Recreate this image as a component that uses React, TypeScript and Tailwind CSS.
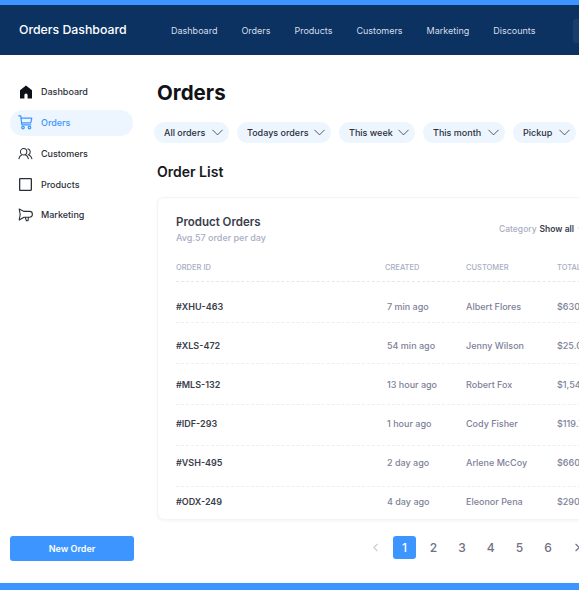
import { ChevronDown, ChevronLeft, ChevronRight } from 'lucide-react'

const topLinks = ['Dashboard', 'Orders', 'Products', 'Customers', 'Marketing', 'Discounts']

const filters = [
  { label: 'All orders', width: 'w-[75px]' },
  { label: 'Todays orders', width: 'w-[94px]' },
  { label: 'This week', width: 'w-[76px]' },
  { label: 'This month', width: 'w-[82px]' },
  { label: 'Pickup', width: 'w-[63px]' },
]

const orders = [
  { id: '#XHU-463', created: '7 min ago', customer: 'Albert Flores', total: '$630.44', top: 'pt-[17px]', height: 'h-[41px]' },
  { id: '#XLS-472', created: '54 min ago', customer: 'Jenny Wilson', total: '$25.00', top: 'pt-[15px]', height: 'h-[41px]' },
  { id: '#MLS-132', created: '13 hour ago', customer: 'Robert Fox', total: '$1,540', top: 'pt-[13px]', height: 'h-[41px]' },
  { id: '#IDF-293', created: '1 hour ago', customer: 'Cody Fisher', total: '$119.70', top: 'pt-[11px]', height: 'h-[41px]' },
  { id: '#VSH-495', created: '2 day ago', customer: 'Arlene McCoy', total: '$660.00', top: 'pt-[9px]', height: 'h-[41px]' },
  { id: '#ODX-249', created: '4 day ago', customer: 'Eleonor Pena', total: '$290.00', top: 'pt-[7px]', height: 'h-[33px]' },
]

function HomeIcon() {
  return (
    <svg width="14" height="14" viewBox="0 0 14 14" fill="#0d1117">
      <path d="M7 .6 13 5.200V13.400H8.600V10a1.600 1.600 0 0 0-3.200 0v3.400H1V5.200z" />
    </svg>
  )
}

function CartIcon() {
  return (
    <svg width="15" height="15" viewBox="0 0 15 15" fill="none" stroke="#3d96ff" strokeWidth="1.200" strokeLinejoin="round" strokeLinecap="round">
      <path d="M.8.8H2.800L3.800 9.800H12.800" />
      <path d="M3 3.200H13.800L12.800 7.800H3.600" />
      <circle cx="5" cy="12.600" r="1.300" />
      <circle cx="11.500" cy="12.600" r="1.300" />
    </svg>
  )
}

function PeopleIcon() {
  return (
    <svg width="16" height="14" viewBox="0 0 16 14" fill="none" stroke="#2b2f38" strokeWidth="1.100">
      <circle cx="6" cy="4.600" r="3.400" />
      <path d="M.8 12.400c.5-2.600 2-4 3.400-4.600M11.200 12.400c-.5-2.600-2-4-3.400-4.600" />
      <path d="M10.200 1.300a3.400 3.400 0 0 1 1 6.400c1.600.7 3.200 2.200 3.800 4.700" />
    </svg>
  )
}

function BoxIcon() {
  return (
    <svg width="13" height="13" viewBox="0 0 13 13" fill="none" stroke="#2b2f38" strokeWidth="1.300">
      <rect x=".65" y=".65" width="11.700" height="11.700" rx=".5" />
    </svg>
  )
}

function MegaphoneIcon() {
  return (
    <svg width="15" height="14" viewBox="0 0 15 14" fill="none" stroke="#2b2f38" strokeWidth="1.100" strokeLinejoin="round">
      <path d="M1.200 1 6 3.400H11.500a2.900 2.900 0 0 1 0 5.800H6L1.200 12 2.200 6.500z" />
      <path d="M7.200 9.200 8.400 12.800H10L10.400 9.200" />
    </svg>
  )
}

const sideLinks = [
  { label: 'Dashboard', icon: <HomeIcon /> },
  { label: 'Orders', icon: <CartIcon />, active: true },
  { label: 'Customers', icon: <PeopleIcon /> },
  { label: 'Products', icon: <BoxIcon /> },
  { label: 'Marketing', icon: <MegaphoneIcon /> },
]

export default function App() {
  return (
    <div className="flex h-[590px] w-[579px] flex-col overflow-hidden bg-white font-['Inter',sans-serif]">
      <div className="h-[5px] shrink-0 bg-[#3d96ff]" />

      {/* Top bar */}
      <header className="flex h-[50px] shrink-0 items-center overflow-hidden bg-[#0b3261] pt-[1px] pl-[19px]">
        <span className="w-[152px] shrink-0 text-[12.300px] font-medium whitespace-nowrap text-white">Orders Dashboard</span>
        <nav className="flex shrink-0 gap-[24px]">
          {topLinks.map((link) => (
            <a key={link} className="text-[9px] whitespace-nowrap text-[#d5deea]">
              {link}
            </a>
          ))}
        </nav>
        <div className="ml-[38px] h-[24px] w-[30px] shrink-0 rounded-[3px] bg-[#1a3e6c]" />
      </header>

      <div className="flex min-h-0 flex-1">
        {/* Sidebar */}
        <aside className="flex w-[157px] shrink-0 flex-col justify-between pt-[24px] pr-[24px] pb-[22px] pl-[10px]">
          <nav className="flex flex-col gap-[4.800px]">
            {sideLinks.map((item) => (
              <a
                key={item.label}
                className={
                  item.active
                    ? 'flex h-[26px] items-center gap-[8px] rounded-full bg-[#edf5ff] pl-[8px] text-[9px] font-medium text-[#3d96ff]'
                    : 'flex h-[26px] items-center gap-[8px] rounded-full pl-[8px] text-[9px] font-medium text-[#2b2f38]'
                }
              >
                <span className="flex w-[15px] shrink-0 justify-center">{item.icon}</span>
                {item.label}
              </a>
            ))}
          </nav>
          <button className="h-[25px] w-[124px] rounded-[3px] bg-[#3d96ff] text-[9px] font-semibold text-white">New Order</button>
        </aside>

        {/* Main */}
        <main className="min-w-0 flex-1 pt-[23px]">
          <h1 className="text-[20.500px] leading-[30px] font-bold text-[#111318]">Orders</h1>

          <div className="-ml-[3px] mt-[14px] flex gap-[8px]">
            {filters.map((filter) => (
              <div
                key={filter.label}
                className={`flex h-[21px] shrink-0 items-center justify-between rounded-full bg-[#edf5ff] pr-[2px] pl-[10px] ${filter.width}`}
              >
                <span className="text-[9px] font-medium whitespace-nowrap text-[#2b2f38]">{filter.label}</span>
                <ChevronDown size={19} strokeWidth={1} color="#2b2f38" />
              </div>
            ))}
          </div>

          <h2 className="mt-[19px] text-[14px] leading-[20px] font-semibold text-[#16181d]">Order List</h2>

          {/* Order card */}
          <section className="mt-[15px] h-[323px] w-[500px] rounded-[7px] border border-[#f3f4f6] bg-white pt-[16px] pl-[18px] shadow-[0_1px_3px_rgba(20,30,60,0.05)]">
            <div className="flex items-start">
              <div className="w-[323px] shrink-0">
                <h3 className="text-[11.500px] leading-[16px] font-semibold text-[#3a3d4b]">Product Orders</h3>
                <p className="mt-[1px] text-[9px] leading-[14px] font-medium text-[#a9adc3]">Avg.57 order per day</p>
              </div>
              <div className="mt-[9px] flex items-center gap-[3px] text-[8.500px] leading-[12px] font-medium whitespace-nowrap">
                <span className="text-[#a9adc3]">Category</span>
                <span className="font-semibold text-[#3a3d4b]">Show all</span>
                <ChevronDown size={10} color="#a9adc3" className="-ml-[1px] shrink-0" />
              </div>
            </div>

            <div className="mt-[17px] flex h-[20px] border-b border-dashed border-[#e6e7ee] text-[7.500px] leading-[12px] font-medium text-[#a9adc3]">
              <span className="w-[209px] shrink-0">ORDER ID</span>
              <span className="w-[81px] shrink-0">CREATED</span>
              <span className="w-[91px] shrink-0">CUSTOMER</span>
              <span className="shrink-0">TOTAL</span>
            </div>

            {orders.map((order, index) => (
              <div
                key={order.id}
                className={`flex items-start text-[9px] leading-[16px] font-medium text-[#7e8199] ${order.top} ${order.height} ${index < orders.length - 1 ? 'border-b border-dashed border-[#eceef3]' : ''}`}
              >
                <span className="w-[211px] shrink-0 font-semibold text-[#3a3d4b]">{order.id}</span>
                <span className="w-[79px] shrink-0">{order.created}</span>
                <span className="w-[91px] shrink-0">{order.customer}</span>
                <span className="shrink-0">{order.total}</span>
              </div>
            ))}
          </section>

          {/* Pagination */}
          <div className="mt-[16px] ml-[212px] flex h-[23px] items-center text-[12px] font-medium text-[#6e7188]">
            <ChevronLeft size={13} color="#c9cbd8" className="mr-[11px] shrink-0" />
            <span className="flex h-[23px] w-[23px] shrink-0 items-center justify-center rounded-[3px] bg-[#3d96ff] text-white">1</span>
            <div className="ml-[3px] flex shrink-0">
              {[2, 3, 4, 5, 6].map((page) => (
                <span key={page} className="flex w-[28.700px] justify-center">
                  {page}
                </span>
              ))}
            </div>
            <ChevronRight size={13} color="#6e7188" className="ml-[9px] shrink-0" />
          </div>
        </main>
      </div>

      <div className="h-[7px] shrink-0 bg-[#3d96ff]" />
    </div>
  )
}
